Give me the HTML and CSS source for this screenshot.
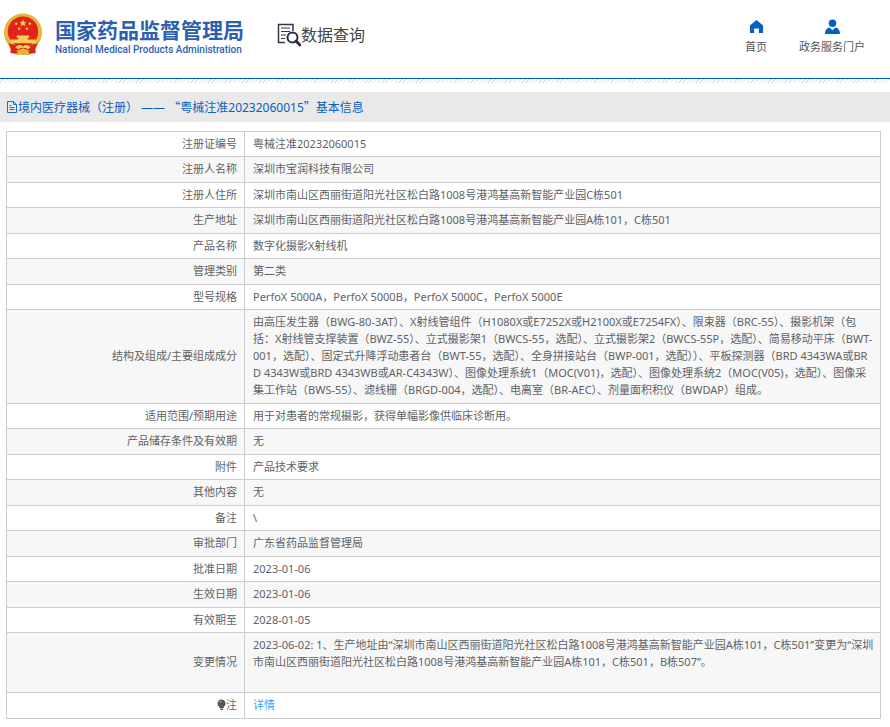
FILE: index.html
```html
<!DOCTYPE html>
<html lang="zh-CN">
<head>
  <meta charset="utf-8">
  <title>国家药品监督管理局 - 数据查询</title>
  <link rel="stylesheet" href="styles.css">
</head>
<body>
  <header class="header">
    <a class="logo" href="#">
      <svg class="emblem" viewBox="0 0 40 44" aria-hidden="true">
        <path d="M8 32 L7 41 L14 42 L20 38 L26 42 L33 41 L32 32Z" fill="#d8261c"/>
        <circle cx="20" cy="20" r="19.500" fill="#e5b53c"/>
        <circle cx="20" cy="19" r="15.500" fill="#e2231a"/>
        <path d="M20 6.500l1 2.600h2.800l-2.200 1.700.8 2.700-2.400-1.600-2.400 1.600.8-2.700-2.200-1.700h2.800z" fill="#f3cf55"/>
        <g fill="#f3cf55">
          <circle cx="13" cy="11" r="1.200"/><circle cx="27" cy="11" r="1.200"/>
          <circle cx="16" cy="16" r="1.200"/><circle cx="24" cy="16" r="1.200"/>
          <path d="M14 23h12l1 2h-2v2h8v4H7v-4h8v-2h-2z"/>
        </g>
        <path d="M5 31q8 3 15 0q7 3 15 0l-3 7q-6 1-12-2q-6 3-12 2z" fill="#d8261c"/>
        <path d="M12 35q4-4 8-1q4-3 8 1l-3 2q-5-3-10 0z" fill="#f3cf55"/>
        <path d="M13 43l2-5h10l2 5z" fill="#e5b53c"/>
      </svg>
      <span class="logo-text">
        <span class="logo-cn">国家药品监督管理局</span>
        <span class="logo-en">National Medical Products Administration</span>
      </span>
    </a>
    <a class="search-title" href="#">
      <svg viewBox="0 0 24 24" aria-hidden="true">
        <path d="M16 8V1.500H1.500v18H8" fill="none" stroke="#34344c" stroke-width="1.500"/>
        <path d="M4 5h9M4 8.500h9M4 12h5M4 15.500h4" stroke="#34344c" stroke-width="1.200"/>
        <circle cx="15.500" cy="14.500" r="5" fill="#fff" stroke="#292942" stroke-width="2"/>
        <path d="M19 18l4 4" stroke="#292942" stroke-width="3" stroke-linecap="round"/>
      </svg>
      <span>数据查询</span>
    </a>
    <nav class="nav">
      <a href="#">
        <svg viewBox="0 0 16 16" aria-hidden="true"><path d="M8 1L1 7v8h4.500v-5h5v5H15V7z" fill="#0560c2"/></svg>
        <span>首页</span>
      </a>
      <a href="#">
        <svg viewBox="0 0 16 16" aria-hidden="true"><circle cx="8" cy="4.500" r="4" fill="#0560c2"/><path d="M0 16q0-6 5-7l3 3 3-3q5 1 5 7z" fill="#0560c2"/></svg>
        <span>政务服务门户</span>
      </a>
    </nav>
  </header>
  <div class="stripe"></div>
  <main>
    <h1 class="page-title">
      <svg viewBox="0 0 12 12" aria-hidden="true"><path d="M1.500.5h6l3 3v8h-9zM7.500.5v3h3M3.500 4.500h2M3.500 6.500h5M3.500 8.500h5" fill="none" stroke="#1b6cc6"/></svg>
      <span>境内医疗器械（注册） —— <span class="q">“</span>粤械注准20232060015<span class="q">”</span>基本信息</span>
    </h1>
    <table class="info">
      <tr><th scope="row">注册证编号</th><td>粤械注准20232060015</td></tr>
      <tr><th scope="row">注册人名称</th><td>深圳市宝润科技有限公司</td></tr>
      <tr><th scope="row">注册人住所</th><td>深圳市南山区西丽街道阳光社区松白路1008号港鸿基高新智能产业园C栋501</td></tr>
      <tr><th scope="row">生产地址</th><td>深圳市南山区西丽街道阳光社区松白路1008号港鸿基高新智能产业园A栋101，C栋501</td></tr>
      <tr><th scope="row">产品名称</th><td>数字化摄影X射线机</td></tr>
      <tr><th scope="row">管理类别</th><td>第二类</td></tr>
      <tr><th scope="row">型号规格</th><td>PerfoX 5000A，PerfoX 5000B，PerfoX 5000C，PerfoX 5000E</td></tr>
      <tr><th scope="row">结构及组成/主要组成成分</th><td>由高压发生器（BWG-80-3AT）、X射线管组件（H1080X或E7252X或H2100X或E7254FX）、限束器（BRC-55）、摄影机架（包<br>括：X射线管支撑装置（BWZ-55）、立式摄影架1（BWCS-55，选配）、立式摄影架2（BWCS-55P，选配）、简易移动平床（BWT-<br>001，选配）、固定式升降浮动患者台（BWT-55，选配）、全身拼接站台（BWP-001，选配））、平板探测器（BRD 4343WA或BR<br>D 4343W或BRD 4343WB或AR-C4343W）、图像处理系统1（MOC(V01)，选配）、图像处理系统2（MOC(V05)，选配）、图像采<br>集工作站（BWS-55）、滤线栅（BRGD-004，选配）、电离室（BR-AEC）、剂量面积积仪（BWDAP）组成。</td></tr>
      <tr><th scope="row">适用范围/预期用途</th><td>用于对患者的常规摄影，获得单幅影像供临床诊断用。</td></tr>
      <tr><th scope="row">产品储存条件及有效期</th><td>无</td></tr>
      <tr><th scope="row">附件</th><td>产品技术要求</td></tr>
      <tr><th scope="row">其他内容</th><td>无</td></tr>
      <tr><th scope="row">备注</th><td>\</td></tr>
      <tr><th scope="row">审批部门</th><td>广东省药品监督管理局</td></tr>
      <tr><th scope="row">批准日期</th><td>2023-01-06</td></tr>
      <tr><th scope="row">生效日期</th><td>2023-01-06</td></tr>
      <tr><th scope="row">有效期至</th><td>2028-01-05</td></tr>
      <tr><th scope="row">变更情况</th><td>2023-06-02: 1、生产地址由“深圳市南山区西丽街道阳光社区松白路1008号港鸿基高新智能产业园A栋101，C栋501”变更为“深圳<br>市南山区西丽街道阳光社区松白路1008号港鸿基高新智能产业园A栋101，C栋501，B栋507”。<br><br></td></tr>
      <tr><th scope="row"><svg class="bulb" viewBox="0 0 10 12" aria-hidden="true"><path d="M5 .5a4.500 4.500 0 0 1 2.500 8.200V10h-5V8.700A4.500 4.500 0 0 1 5 .5zM3.500 10.500h3v1.500h-3z" fill="#555"/><path d="M3 4q.3-1.500 2-1.800" fill="none" stroke="#ddd" stroke-width=".8"/></svg>注</th><td><a href="#">详情</a></td></tr>
    </table>
  </main>
</body>
</html>
```

FILE: styles.css
```css
body {
  margin: 0;
  font-family: "Noto Sans", "Noto Sans CJK SC", sans-serif;
  font-size: 11px;
  line-height: 17px;
  color: #606266;
  background-color: #fff;
}

a {
  color: #409eff;
  text-decoration: none;
}

.header {
  display: flex;
  align-items: center;
  height: 78px;
  border-bottom: 1px solid #0560c2;
}

.logo {
  display: flex;
  align-items: center;
  gap: 12px;
  margin-left: 3px;
  padding-bottom: 5px;
  color: #2d5fb0;
}

.emblem {
  width: 40px;
  height: 43px;
  padding-bottom: 5px;
}

.logo-text {
  display: flex;
  flex-direction: column;
  gap: 2px;
}

.logo-cn {
  font-family: "Noto Sans CJK SC", sans-serif;
  font-size: 21px;
  font-weight: bold;
  line-height: 24px;
}

.logo-en {
  font-family: Roboto, Arial, sans-serif;
  font-size: 10px;
  font-weight: 500;
  line-height: 14px;
}

.search-title {
  display: flex;
  align-items: center;
  margin-left: 33px;
  padding-bottom: 8px;
  font-size: 16px;
  line-height: 24px;
  color: #444;
}

.search-title svg {
  width: 24px;
  height: 24px;
}

.nav {
  display: flex;
  gap: 32px;
  margin-left: auto;
  padding-right: 25px;
  padding-bottom: 4px;
}

.nav a {
  display: flex;
  flex-direction: column;
  align-items: center;
  gap: 4px;
  color: #555;
}

.nav svg {
  width: 15px;
  height: 15px;
}

.stripe {
  height: 4px;
  margin-bottom: 9px;
  background: repeating-linear-gradient(135deg, #fff 0, #fff 2px, #e4e4e4 2px, #e4e4e4 3px);
}

.page-title {
  display: flex;
  align-items: center;
  margin: 0 0 9px;
  padding: 0 6px;
  font-size: 12px;
  font-weight: normal;
  line-height: 29px;
  color: #0560c2;
  background-color: #e9e9e9;
}

.page-title svg {
  width: 12px;
  height: 12px;
}

.q {
  font-family: "Noto Sans CJK SC", sans-serif;
}

.info {
  width: calc(100% - 15px);
  margin-left: 6px;
  border-collapse: collapse;
}

.info th,
.info td {
  padding: 3px 7px 4px;
  border: 1px solid #ccc;
}

.info th {
  width: 223px;
  font-weight: normal;
  text-align: right;
}

.info td {
  padding-right: 0;
  padding-left: 8px;
}

.info tr:nth-child(even) {
  background-color: #f7f7f7;
}

.info tr:nth-child(even) th,
.info tr:nth-child(even) td,
.info tr:last-child th,
.info tr:last-child td {
  padding-bottom: 5px;
}

.bulb {
  width: 9px;
  height: 11px;
  vertical-align: -1px;
}
```
